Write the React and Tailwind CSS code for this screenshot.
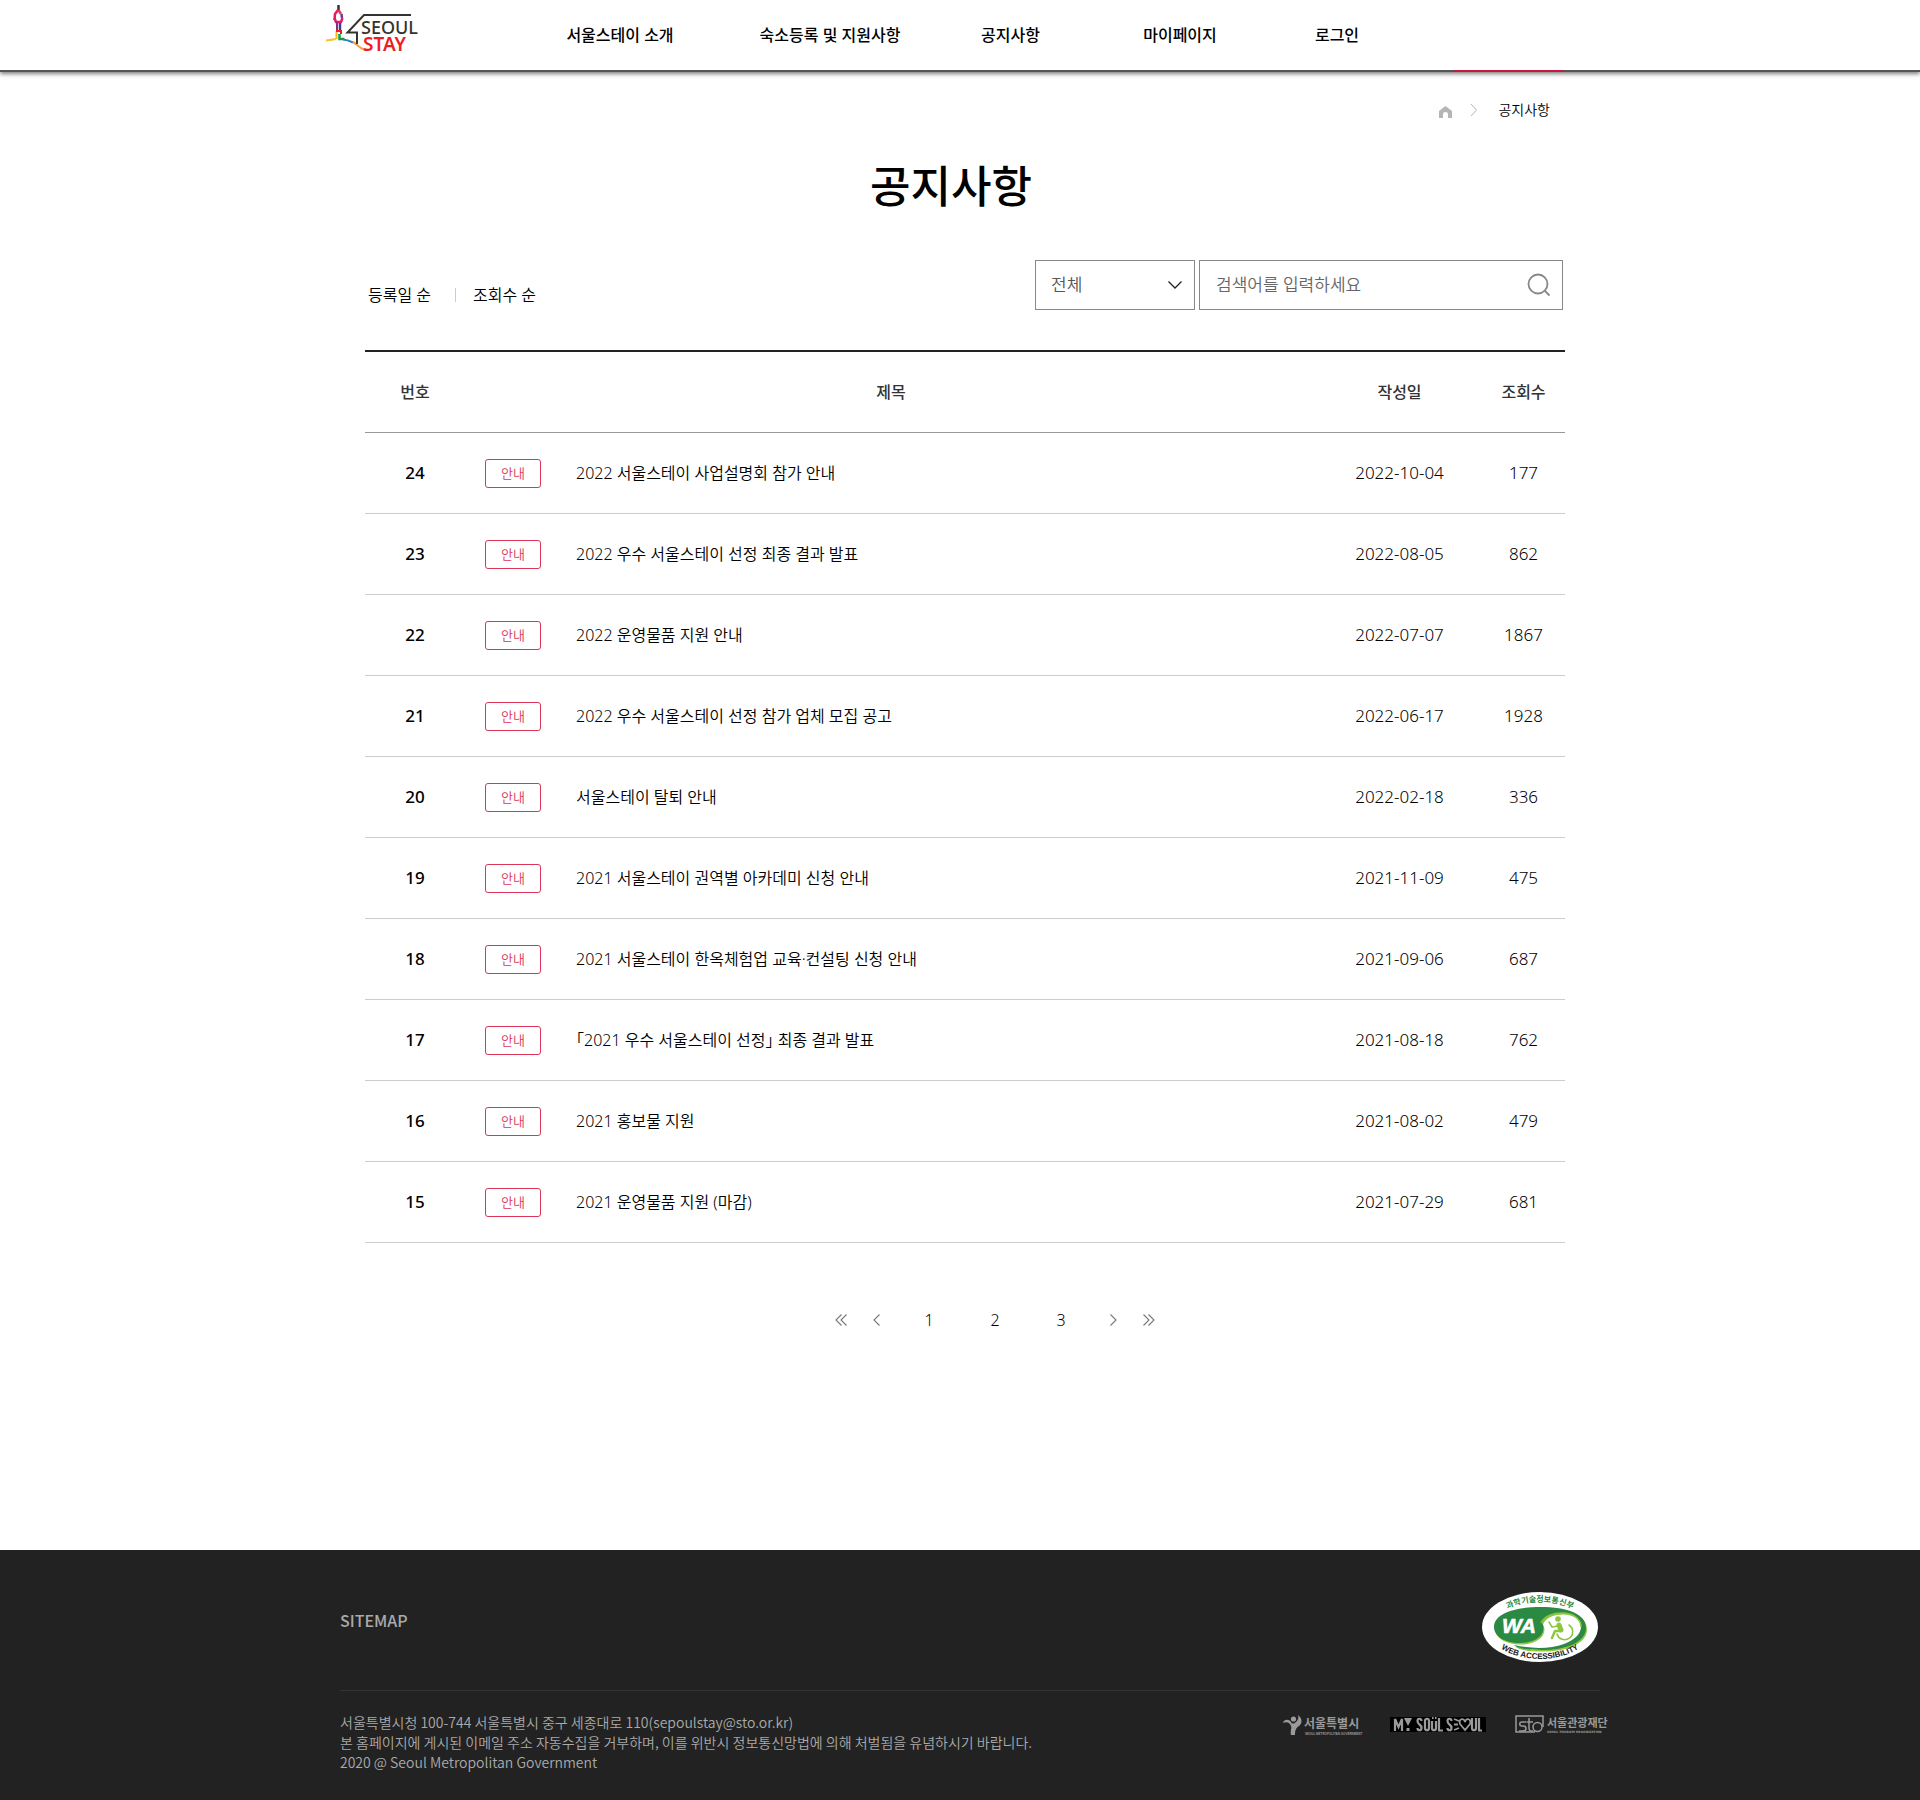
const NAV = [
  ['서울스테이 소개', 'w-[190px]'],
  ['숙소등록 및 지원사항', 'w-[230px]'],
  ['공지사항', 'w-[131px]'],
  ['마이페이지', 'w-[208px]'],
  ['로그인', 'w-[106px]'],
];

const POSTS = [
  [24, '2022 서울스테이 사업설명회 참가 안내', '2022-10-04', 177],
  [23, '2022 우수 서울스테이 선정 최종 결과 발표', '2022-08-05', 862],
  [22, '2022 운영물품 지원 안내', '2022-07-07', 1867],
  [21, '2022 우수 서울스테이 선정 참가 업체 모집 공고', '2022-06-17', 1928],
  [20, '서울스테이 탈퇴 안내', '2022-02-18', 336],
  [19, '2021 서울스테이 권역별 아카데미 신청 안내', '2021-11-09', 475],
  [18, '2021 서울스테이 한옥체험업 교육·컨설팅 신청 안내', '2021-09-06', 687],
  [17, '「2021 우수 서울스테이 선정」 최종 결과 발표', '2021-08-18', 762],
  [16, '2021 홍보물 지원', '2021-08-02', 479],
  [15, '2021 운영물품 지원 (마감)', '2021-07-29', 681],
];

function Logo() {
  return (
    <svg viewBox="0 0 96 54" className="h-[54px] w-[96px] overflow-visible" fill="none" role="img" aria-label="SEOUL STAY">
      <path d="M13.500 5v6" stroke="#333" strokeWidth="2.500" />
      <path d="M13 10l-3 4-.5 6" stroke="#e6186d" strokeWidth="2.500" />
      <path d="M13.500 10l2.500 4" stroke="#ef3b3b" strokeWidth="2.500" />
      <path d="M16.500 14l.5 4" stroke="#5b3fa0" strokeWidth="2.500" />
      <path d="M9.500 18l1.500 4h5l1.500-4" stroke="#e6186d" strokeWidth="2.500" />
      <path d="M12 22v8" stroke="#8a2b7c" strokeWidth="2" />
      <path d="M15 23v7" stroke="#3b3f9c" strokeWidth="2.500" />
      <path d="M11.500 31v8" stroke="#f5b623" strokeWidth="2" />
      <path d="M11 31h5v3" stroke="#ed1c24" strokeWidth="2" />
      <path d="M14.500 34v5h5" stroke="#129b48" strokeWidth="2.500" />
      <path d="M1 40.500c4-.5 7-1 10-1.500" stroke="#f9c233" strokeWidth="2" />
      <path d="M18 39.500c4 .2 7 1.500 10 3" stroke="#2d7fc1" strokeWidth="2" />
      <path d="M28 42c4 2 6 6 12 8" stroke="#f5a13c" strokeWidth="2" />
      <path d="M86 15H39L22.500 32.500H32V44" stroke="#35332e" strokeWidth="2" />
      <text x="36" y="34" fontSize="18" fontWeight="500" fill="#35332e" fontFamily="'Noto Sans', sans-serif">SEOUL</text>
      <text x="38" y="51" fontSize="19" fontWeight="600" fill="#ee1c25" fontFamily="'Noto Sans', sans-serif">STAY</text>
    </svg>
  );
}

function Chevron({ double, right }) {
  return (
    <svg viewBox="0 0 12 12" className={right ? 'size-3 rotate-180' : 'size-3'} fill="none" stroke="#777" strokeWidth="1.100">
      {double ? <path d="M6.500 .5L1 6l5.500 5.500M11.500 .5L6 6l5.500 5.500" /> : <path d="M8.500 .5L3 6l5.500 5.500" />}
    </svg>
  );
}

const WA_BODY =
  'M12 35C12 22 32 15 58 15C86 15 104 22 104 36C104 51 82 58 60 58C48 58 36 57 32 53C50 57 68 57 82 52C92 48 99 42 99 35C99 26 90 21 80 21C70 21 62 25 60 31C61 33 62 35 61 39C59 47 48 51 38 51C22 51 12 44 12 35z';

function WebAccessibilityMark() {
  return (
    <svg viewBox="0 0 116 70" className="h-[70px] w-[116px] overflow-visible" role="img" aria-label="과학기술정보통신부 WEB ACCESSIBILITY">
      <defs>
        <path id="wa-top" d="M10 36A48 26 0 0 1 106 36" />
        <path id="wa-bottom" d="M6 35A52 32 0 0 0 110 35" />
      </defs>
      <ellipse cx="58" cy="35" rx="58" ry="35" fill="#fff" />
      <path d={WA_BODY} fill="#8dc63f" transform="translate(1 1.500)" />
      <path d={WA_BODY} fill="#2a8a43" />
      <path d="M59 31C62 24 71 21 80 21C90 21 99 26 99 35" fill="none" stroke="#8dc63f" strokeWidth="1.500" />
      <text x="20" y="41" fontSize="21" fontWeight="700" fontStyle="italic" fill="#fff" stroke="#fff" strokeWidth=".6" fontFamily="'Liberation Sans', sans-serif">WA</text>
      <g fill="none" stroke="#8dc63f" strokeLinecap="round" strokeLinejoin="round">
        <circle cx="76" cy="27" r="2.800" fill="#8dc63f" stroke="none" />
        <path d="M77 33l2 5" strokeWidth="5" />
        <path d="M76 34l-6 1-3-5" strokeWidth="1.500" />
        <path d="M79 39h-6l-3 7" strokeWidth="2.500" />
        <path d="M87 33a8 8 0 1 1-12 9" strokeWidth="1.600" />
      </g>
      <text fontSize="8" fontWeight="700" fill="#2a8a43" fontFamily="'Noto Sans CJK KR', sans-serif" textAnchor="middle">
        <textPath href="#wa-top" startOffset="50%">과학기술정보통신부</textPath>
      </text>
      <text fontSize="8" fontWeight="700" fill="#222" fontFamily="'Liberation Sans', sans-serif" textAnchor="middle">
        <textPath href="#wa-bottom" startOffset="50%">WEB ACCESSIBILITY</textPath>
      </text>
    </svg>
  );
}

function SeoulCityLogo() {
  return (
    <svg viewBox="0 0 78 22" className="h-[22px] w-[78px] overflow-visible" fill="#9a9a9a" role="img" aria-label="서울특별시">
      <circle cx="10.500" cy="5" r="2.600" />
      <path d="M0 9c1-4 6-4 8-1 1 2 3 2 5 0 2-2 3-4 2-7 4 3 5 8 1 11-3 2-4 4-4 9H8c-1-4 1-7 0-9-1-3-4-5-8-3z" />
      <text x="21" y="14" fontSize="12" fontWeight="700" fontFamily="'Noto Sans CJK KR', sans-serif">서울특별시</text>
      <text x="22" y="21" fontSize="3" fontWeight="700" fontFamily="'Liberation Sans', sans-serif">SEOUL METROPOLITAN GOVERNMENT</text>
    </svg>
  );
}

function MySoulLogo() {
  return (
    <svg viewBox="0 0 96 15" className="h-[15px] w-[96px]" role="img" aria-label="MY SOUL SEOUL">
      <rect width="96" height="15" fill="#000" />
      <g fill="none" stroke="#9a9a9a" strokeWidth="2.200">
        <path d="M5 14V2l3.500 8L12 2v12" />
        <path d="M31.500 4c0-3-4-3-4 0 0 4 4 3 4 7 0 3-4 3-4 0" />
        <path d="M35 4c0-3 4-3 4 0v7c0 3-4 3-4 0z" />
        <path d="M42 4v7c0 3 4 3 4 0V4M49 1v12.500h4" />
        <path d="M61.500 4c0-3-4-3-4 0 0 4 4 3 4 7 0 3-4 3-4 0" />
        <path d="M64 2l5 2M64 7.500h4M64 13l5-2" strokeWidth="1.800" />
        <path d="M75 13l-5-6c-2-5 4-7 5-2 1-5 7-3 5 2z" strokeWidth="1.800" />
        <path d="M82 1v10c0 3 4 3 4 0V1M89 1v12.500h3" />
      </g>
      <path d="M14 1h8l-4 8zM16.500 11h3v3h-3zM42 0h1.500v2H42zM45 0h1.500v2H45z" fill="#9a9a9a" />
    </svg>
  );
}

function TourismLogo() {
  return (
    <svg viewBox="0 0 95 19" className="h-[19px] w-[95px] overflow-visible" role="img" aria-label="서울관광재단">
      <g fill="none" stroke="#9a9a9a" strokeWidth="1.500">
        <path d="M20 17H1V1h27v11" />
        <path d="M11 7H7c-3 0-3 4 0 4h1c4 0 4 5 0 5H4M14 3v10c0 3 1 3 4 3M11.500 7H18" />
        <circle cx="22.500" cy="12" r="4.500" />
      </g>
      <text x="32" y="12" fontSize="11" fontWeight="700" fill="#9a9a9a" fontFamily="'Noto Sans CJK KR', sans-serif">서울관광재단</text>
      <text x="32" y="18" fontSize="3" fontWeight="700" fill="#9a9a9a" fontFamily="'DejaVu Sans', sans-serif">SEOUL TOURISM ORGANIZATION</text>
    </svg>
  );
}

export default function App() {
  return (
    <div className="bg-white font-['Noto_Sans','Noto_Sans_CJK_KR',sans-serif] text-black">
      <header className="border-b-2 border-[#555] shadow-[0_2px_4px_rgba(0,0,0,0.5)]">
        <div className="mx-auto flex h-[70px] max-w-[1270px] items-start">
          <a href="#home" className="mr-[104px]"><Logo /></a>
          <nav className="flex h-[70px] items-center text-base font-medium">
            {NAV.map(([label, width]) => (
              <a key={label} href="#nav" className={'text-center whitespace-nowrap ' + width}>{label}</a>
            ))}
          </nav>
          <span className="mr-[32px] -mb-[2px] ml-auto h-[2px] w-[110px] self-end bg-[#c8193c]" />
        </div>
      </header>

      <main className="mx-auto box-content max-w-[1200px] pl-[10px]">
        <div className="flex h-[76px] items-center justify-end pr-[15px] text-sm font-[350]">
          <a href="#home" aria-label="홈" className="mt-[4px]">
            <svg viewBox="0 0 13 12" className="h-3 w-[13px]" fill="#b5b5b5"><path d="M6.500 0L13 5v7H9V8.500a2.500 2.500 0 0 0-5 0V12H0V5z" /></svg>
          </a>
          <svg viewBox="0 0 8 12" className="mr-[20px] ml-[18px] h-3 w-2" fill="none" stroke="#b5b5b5"><path d="M1 0l5.500 6L1 12" /></svg>
          <a href="#notice">공지사항</a>
        </div>

        <h1 className="pr-[28px] text-center text-[44px] leading-[76px] font-medium">공지사항</h1>

        <div className="mt-[36px] flex items-start justify-between pr-[2px] pl-[3px] text-[17px]">
          <div className="mt-[23px] flex items-center text-base leading-6 font-[350]">
            <button>등록일 순</button>
            <span className="mr-[17px] ml-[24px] h-[14px] w-px bg-[#ccc]" />
            <button>조회수 순</button>
          </div>
          <form className="flex gap-[4px]">
            <div className="relative">
              <select aria-label="검색 구분" className="h-[50px] w-[160px] appearance-none border border-[#888] bg-white px-[15px] font-[350] text-[#555]">
                <option>전체</option>
              </select>
              <svg viewBox="0 0 14 8" className="pointer-events-none absolute top-[21px] right-[13px] h-2 w-[14px]" fill="none" stroke="#222" strokeWidth="1.300"><path d="M.5 .5L7 7l6.500-6.500" /></svg>
            </div>
            <div className="flex h-[50px] w-[364px] items-center border border-[#888] pr-[11px] pl-[16px]">
              <input aria-label="검색어" placeholder="검색어를 입력하세요" className="min-w-0 flex-1 font-[350] outline-none placeholder:text-[#666]" />
              <button type="button" aria-label="검색">
                <svg viewBox="0 0 24 24" className="size-6" fill="none" stroke="#888" strokeWidth="1.800"><circle cx="11" cy="11" r="9.500" /><path d="M17.500 17.500l5 5" /></svg>
              </button>
            </div>
          </form>
        </div>

        <table className="mt-[40px] w-full table-fixed border-t-2 border-[#222]">
          <colgroup>
            <col className="w-[100px]" /><col className="w-[96px]" /><col /><col className="w-[165px]" /><col className="w-[83px]" />
          </colgroup>
          <thead>
            <tr className="h-[81px] border-b border-[#999] text-base text-[#333]">
              <th className="font-medium">번호</th>
              <th colSpan={2} className="font-medium">제목</th>
              <th className="font-medium">작성일</th>
              <th className="font-medium">조회수</th>
            </tr>
          </thead>
          <tbody>
            {POSTS.map(([no, title, date, views]) => (
              <tr key={no} className="h-[81px] border-b border-[#ccc] text-center text-[17px] font-[350]">
                <td className="font-medium">{no}</td>
                <td className="pt-[2px] pl-[20px]">
                  <span className="flex h-[29px] w-[56px] items-center justify-center rounded-[3px] border border-[#dc3558] text-[13px] text-[#dc3558]">안내</span>
                </td>
                <td className="pl-[15px] text-left text-base [font-feature-settings:'halt']"><a href="#post">{title}</a></td>
                <td>{date}</td>
                <td>{views}</td>
              </tr>
            ))}
          </tbody>
        </table>

        <nav aria-label="페이지" className="mt-[59px] flex items-center justify-center pl-[60px] text-base leading-[36px] font-[350]">
          <button aria-label="처음" className="flex w-[36px] justify-center"><Chevron double /></button>
          <button aria-label="이전" className="flex w-[36px] justify-center"><Chevron /></button>
          <div className="flex px-px">
            {[1, 2, 3].map((n) => <button key={n} className="w-[66px]">{n}</button>)}
          </div>
          <button aria-label="다음" className="flex w-[36px] justify-center"><Chevron right /></button>
          <button aria-label="마지막" className="flex w-[36px] justify-center"><Chevron double right /></button>
        </nav>
      </main>

      <footer className="mt-[212px] bg-[#222] pb-[28px] font-['Noto_Sans_CJK_KR',sans-serif] text-[#aaa]">
        <div className="mx-auto max-w-[1280px] pl-[20px]">
          <div className="flex h-[141px] items-center justify-between border-b border-[#333] pr-[2px]">
            <a href="#sitemap" className="text-base font-medium">SITEMAP</a>
            <div className="pt-[14px]"><WebAccessibilityMark /></div>
          </div>
          <div className="flex justify-between pt-[21px]">
            <address className="text-sm leading-5 font-[350] not-italic">
              서울특별시청 100-744 서울특별시 중구 세종대로 110(sepoulstay@sto.or.kr)<br />
              본 홈페이지에 게시된 이메일 주소 자동수집을 거부하며, 이를 위반시 정보통신망법에 의해 처벌됨을 유념하시기 바랍니다.<br />
              2020 @ Seoul Metropolitan Government
            </address>
            <div className="-mr-[10px] flex h-[26px] items-center gap-[29px]">
              <SeoulCityLogo /><MySoulLogo /><TourismLogo />
            </div>
          </div>
        </div>
      </footer>
    </div>
  );
}
